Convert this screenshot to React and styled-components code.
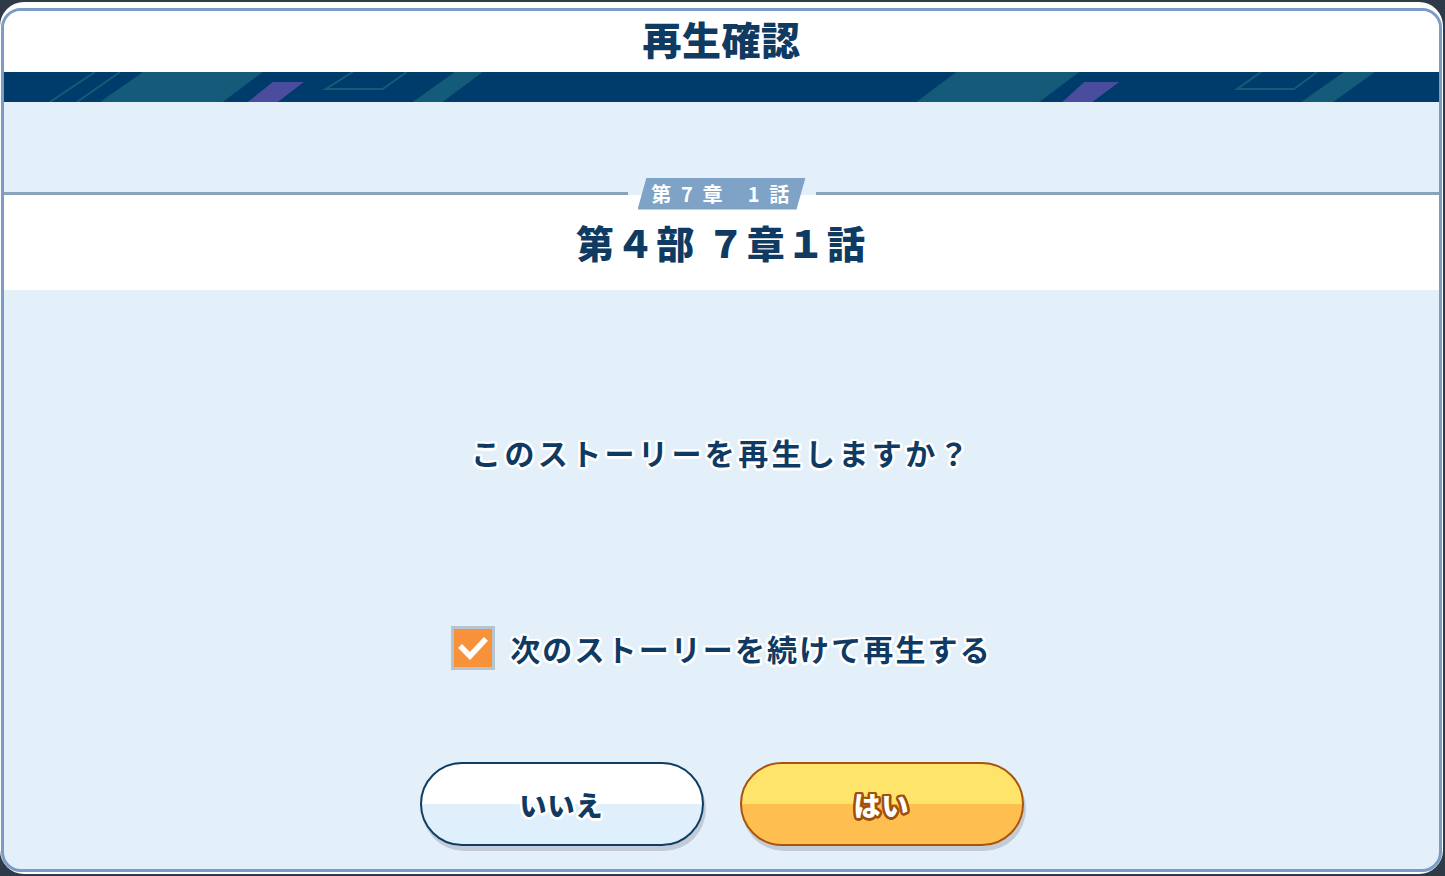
import React, { useState } from "react";
import styled, { createGlobalStyle, css } from "styled-components";

const GlobalStyle = createGlobalStyle`
	html, body {
		margin: 0;
		padding: 0;
		background: #2e3a47;
	}
	body {
		font-family: "Noto Sans CJK JP", "Noto Sans", sans-serif;
		color: #0e3a63;
	}
`;

const ring = (c, w) => {
	const s = [];
	for (let i = 0; i < 16; i++) {
		const a = (i / 16) * Math.PI * 2;
		s.push(`${(Math.cos(a) * w).toFixed(2)}px ${(Math.sin(a) * w).toFixed(2)}px 0 ${c}`);
	}
	return s.join(", ");
};

const Frame = styled.div`
	margin: 2px 2px 1px 0;
	background: #ffffff;
	border-radius: 24px;
	padding: 6px 1px 2px 1px;
`;

const Panel = styled.div`
	height: 858px;
	border: 3px solid #7b9cc6;
	border-radius: 20px;
	overflow: hidden;
	background: #e3f0fa;
	display: flex;
	flex-direction: column;
`;

const Header = styled.div`
	height: 61px;
	background: #ffffff;
	display: flex;
	align-items: center;
	justify-content: center;
`;

const Title = styled.h1`
	margin: 0;
	font-size: 39px;
	font-weight: 900;
	letter-spacing: 0.5px;
	line-height: 1;
	padding-bottom: 6px;
	color: #0f3a62;
`;

const Band = styled.div`
	height: 30px;
	background: #003c6b;
	svg {
		display: block;
		width: 100%;
		height: 30px;
	}
`;

const Gap = styled.div`
	height: 90px;
`;

const Divider = styled.div`
	height: 3px;
	display: flex;
	align-items: center;
	gap: 10px;
`;

const Rule = styled.div`
	flex: 1;
	height: 3px;
	background: #89a3bb;
`;

const Tag = styled.div`
	position: relative;
	z-index: 1;
	width: 168px;
	height: 32px;
	flex: none;
	background: #7fa3c6;
	clip-path: polygon(9px 0, 100% 0, calc(100% - 9px) 100%, 0 100%);
	display: flex;
	align-items: center;
	justify-content: center;
	color: #ffffff;
	font-size: 20px;
	font-weight: 700;
	letter-spacing: 2.6px;
	white-space: pre;
`;

const Episode = styled.div`
	height: 95px;
	background: #ffffff;
	display: flex;
	align-items: center;
	justify-content: center;
`;

const EpisodeTitle = styled.h2`
	margin: 0;
	font-size: 38px;
	font-weight: 900;
	letter-spacing: 2px;
	line-height: 1;
	padding-bottom: 2px;
	color: #0f3a62;
	white-space: pre;
`;

const Num = styled.span`
	font-variant-east-asian: full-width;
	font-feature-settings: "fwid" 1;
	letter-spacing: 0;
	margin-right: ${(p) => p.$after || 0}px;
`;

const Body = styled.div`
	flex: 1;
	display: flex;
	flex-direction: column;
	align-items: center;
`;

const Question = styled.p`
	margin: 142px 0 0;
	height: 40px;
	line-height: 40px;
	font-size: 30px;
	font-weight: 700;
	letter-spacing: 3.4px;
	text-shadow: ${ring("#ffffff", 2.5)};
`;

const CheckRow = styled.label`
	margin-top: 154px;
	display: flex;
	align-items: center;
	gap: 15px;
	cursor: pointer;
	font-size: 30px;
	font-weight: 700;
	letter-spacing: 2.1px;
	text-shadow: ${ring("#ffffff", 2.5)};
`;

const Box = styled.span`
	width: 38px;
	height: 38px;
	flex: none;
	border: 3px solid #b6c3d0;
	background: ${(p) => (p.$on ? "#f8923a" : "#ffffff")};
	display: flex;
	align-items: center;
	justify-content: center;
`;

const Buttons = styled.div`
	margin-top: 92px;
	display: flex;
	gap: 36px;
`;

const variants = {
	no: css`
		border-color: #0f3d63;
		background: linear-gradient(to bottom, #ffffff 50%, #dff0fc 50%);
		color: #0f3a62;
		text-shadow: ${ring("#ffffff", 2.5)};
	`,
	yes: css`
		border-color: #a8540f;
		background: linear-gradient(to bottom, #ffe46c 50%, #ffbf50 50%);
		color: #ffffff;
		text-shadow: ${ring("#a24f0a", 2.5)};
	`,
};

const Button = styled.button`
	width: 284px;
	height: 84px;
	border: 2px solid;
	border-radius: 42px;
	box-shadow: 2px 5px 0 #c3ccd6;
	font-family: inherit;
	font-size: 27px;
	font-weight: 900;
	letter-spacing: 1px;
	cursor: pointer;
	padding: 0;
	${(p) => variants[p.$variant]}
`;

function Stripes() {
	const teal = "#135b78";
	const purple = "#4a4d9e";
	return (
		<svg viewBox="4 0 1436 30" preserveAspectRatio="none">
			<line x1="50" y1="30" x2="95" y2="0" stroke={teal} strokeWidth="2" />
			<line x1="77" y1="30" x2="120" y2="0" stroke={teal} strokeWidth="2" />
			<polygon points="100,30 143,0 263,0 223,30" fill={teal} />
			<polygon points="248,30 273,10 304,10 278,30" fill={purple} />
			<polyline points="353,0 326,17 383,17 407,0" fill="none" stroke={teal} strokeWidth="2" />
			<polygon points="413,30 455,0 483,0 443,30" fill={teal} />
			<polygon points="917,30 957,0 1080,0 1040,30" fill={teal} />
			<polygon points="1063,30 1085,10 1120,10 1093,30" fill={purple} />
			<polyline points="1262,0 1238,17 1295,17 1318,0" fill="none" stroke={teal} strokeWidth="2" />
			<polygon points="1302,30 1345,0 1376,0 1334,30" fill={teal} />
		</svg>
	);
}

export default function App() {
	const [autoNext, setAutoNext] = useState(true);

	return (
		<>
			<GlobalStyle />
			<Frame>
				<Panel>
					<Header>
						<Title>再生確認</Title>
					</Header>
					<Band>
						<Stripes />
					</Band>
					<Gap />
					<Divider>
						<Rule />
						<Tag>{"第 7 章　1 話"}</Tag>
						<Rule />
					</Divider>
					<Episode>
						<EpisodeTitle>
							第<Num $after={2}>4</Num>部 <Num $after={2}>7</Num>章<Num $after={2}>1</Num>話
						</EpisodeTitle>
					</Episode>
					<Body>
						<Question>このストーリーを再生しますか？</Question>
						<CheckRow onClick={() => setAutoNext(!autoNext)}>
							<Box $on={autoNext}>
								{autoNext && (
									<svg width="30" height="30" viewBox="0 0 30 30">
										<path d="M4 15 L12 23 L26 8" fill="none" stroke="#ffffff" strokeWidth="5.5" strokeLinecap="square" />
									</svg>
								)}
							</Box>
							次のストーリーを続けて再生する
						</CheckRow>
						<Buttons>
							<Button $variant="no">いいえ</Button>
							<Button $variant="yes">はい</Button>
						</Buttons>
					</Body>
				</Panel>
			</Frame>
		</>
	);
}
